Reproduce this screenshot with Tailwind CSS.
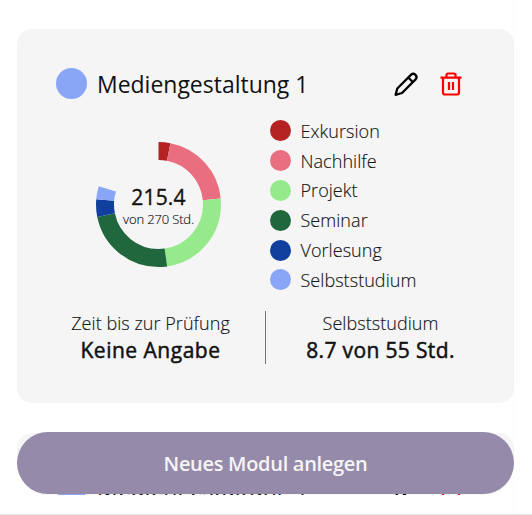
<!DOCTYPE html>
<html lang="de">
<head>
<meta charset="utf-8">
<title>Module</title>
<script src="https://cdn.jsdelivr.net/npm/@tailwindcss/browser@4"></script>
</head>
<body class="relative h-[515px] overflow-hidden bg-white font-['Open_Sans',sans-serif] text-[#111]">
<main class="ml-[17px] h-[495px] w-[497px] overflow-hidden rounded-b-[31px] pt-[29px]">
  <section class="h-[374px] w-[497px] rounded-[15px] bg-[#f5f5f5]">
    <header class="flex items-center pt-[39px] pl-[39px]">
      <span class="size-[31px] rounded-full bg-[#88a6f5]"></span>
      <h2 class="ml-[10px] w-[295px] text-[24px] leading-[31px] whitespace-nowrap"><span class="inline-block origin-left scale-x-[0.957]">Mediengestaltung 1</span></h2>
      <svg class="size-7" viewBox="0 0 28 28" fill="none" stroke="#000" stroke-width="2.300" stroke-linejoin="round"><path d="M3.600 24.800 5.300 18.500 18.900 4.900C22 2 26.400 6.200 23.600 9.400L10 23ZM16.300 7.500 21 12.200"/></svg>
      <svg class="ml-[17px] size-7" viewBox="0 0 28 28" fill="none" stroke="#f00" stroke-width="2.200"><path d="M3.500 7.700H24.500M6 8V22.500Q6 24.500 8 24.500H20Q22 24.500 22 22.500V8M9.500 7.500V5Q9.500 3.500 11 3.500H17Q18.500 3.500 18.500 5V7.500M12 12V20M16 12V20"/></svg>
    </header>
    <div class="flex pt-[17px] pl-[79px]">
      <div class="relative mt-[26px] size-[125px]">
        <svg class="size-[125px] -rotate-90" viewBox="0 0 125 125" fill="none" stroke-width="18">
          <circle cx="62.500" cy="62.500" r="53.500" pathLength="360" stroke="#b52222" stroke-dasharray="11 360"/>
          <circle cx="62.500" cy="62.500" r="53.500" pathLength="360" stroke="#e96e7f" stroke-dasharray="73.500 360" stroke-dashoffset="-11"/>
          <circle cx="62.500" cy="62.500" r="53.500" pathLength="360" stroke="#96ea8b" stroke-dasharray="87.500 360" stroke-dashoffset="-84.500"/>
          <circle cx="62.500" cy="62.500" r="53.500" pathLength="360" stroke="#20673d" stroke-dasharray="86.500 360" stroke-dashoffset="-172"/>
          <circle cx="62.500" cy="62.500" r="53.500" pathLength="360" stroke="#103f9d" stroke-dasharray="16.500 360" stroke-dashoffset="-258.500"/>
          <circle cx="62.500" cy="62.500" r="53.500" pathLength="360" stroke="#88a6f5" stroke-dasharray="12 360" stroke-dashoffset="-275"/>
        </svg>
        <div class="absolute inset-0 flex flex-col items-center pt-[42px]">
          <span class="text-[21px] leading-[26px] tracking-[0.2px] [-webkit-text-stroke:0.35px_#111]">215.4</span>
          <span class="text-[13px] leading-[18px] tracking-[-0.15px] font-light whitespace-nowrap [-webkit-text-stroke:0.15px_#111]">von 270 Std.</span>
        </div>
      </div>
      <ul class="ml-[49px] grid auto-rows-[29.800px] text-[18px] font-light tracking-[0.05px] [-webkit-text-stroke:0.15px_#222]">
        <li class="flex items-center gap-[9.500px]"><i class="size-[21px] rounded-full bg-[#b52222]"></i><span class="pt-px">Exkursion</span></li>
        <li class="flex items-center gap-[9.500px]"><i class="size-[21px] rounded-full bg-[#e96e7f]"></i><span class="pt-px">Nachhilfe</span></li>
        <li class="flex items-center gap-[9.500px]"><i class="size-[21px] rounded-full bg-[#96ea8b]"></i><span>Projekt</span></li>
        <li class="flex items-center gap-[9.500px]"><i class="size-[21px] rounded-full bg-[#20673d]"></i><span>Seminar</span></li>
        <li class="flex items-center gap-[9.500px]"><i class="size-[21px] rounded-full bg-[#103f9d]"></i><span>Vorlesung</span></li>
        <li class="flex items-center gap-[9.500px]"><i class="size-[21px] rounded-full bg-[#88a6f5]"></i><span class="pt-px">Selbststudium</span></li>
      </ul>
    </div>
    <div class="mt-[16px] flex h-[53px] pl-[19px] text-center">
      <div class="w-[230px] border-r border-[#777]">
        <p class="text-[18px] leading-[25px] font-light tracking-[0.05px] [-webkit-text-stroke:0.15px_#222]">Zeit bis zur Prüfung</p>
        <p class="text-[21px] leading-[28px] tracking-[0.5px] [-webkit-text-stroke:0.5px_#111]">Keine Angabe</p>
      </div>
      <div class="w-[229px]">
        <p class="text-[18px] leading-[25px] font-light tracking-[0.05px] [-webkit-text-stroke:0.15px_#222]">Selbststudium</p>
        <p class="text-[21px] leading-[28px] tracking-[0.35px] [-webkit-text-stroke:0.5px_#111]">8.7 von 55 Std.</p>
      </div>
    </div>
  </section>
  <section class="mt-[30px] h-[374px] w-[497px] rounded-[15px] bg-[#f5f5f5]">
    <header class="flex items-center pt-[39px] pl-[39px]">
      <span class="size-[31px] rounded-full bg-[#88a6f5]"></span>
      <h2 class="ml-[10px] w-[295px] text-[24px] leading-[31px] whitespace-nowrap"><span class="inline-block origin-left scale-x-[0.957]">Mediengestaltung 1</span></h2>
      <svg class="size-7" viewBox="0 0 28 28" fill="none" stroke="#000" stroke-width="2.300" stroke-linejoin="round"><path d="M3.600 24.800 5.300 18.500 18.900 4.900C22 2 26.400 6.200 23.600 9.400L10 23ZM16.300 7.500 21 12.200"/></svg>
      <svg class="ml-[17px] size-7" viewBox="0 0 28 28" fill="none" stroke="#f00" stroke-width="2.200"><path d="M3.500 7.700H24.500M6 8V22.500Q6 24.500 8 24.500H20Q22 24.500 22 22.500V8M9.500 7.500V5Q9.500 3.500 11 3.500H17Q18.500 3.500 18.500 5V7.500M12 12V20M16 12V20"/></svg>
    </header>
  </section>
</main>
<div class="absolute top-0 left-[513px] h-[514px] w-px bg-black/[0.015]"></div>
<button class="absolute top-[432px] left-[17px] h-[62.400px] w-[497px] rounded-full bg-[#968aaa] pt-[2px] text-[20px] font-semibold tracking-[-0.300px] text-[#f5f5f5]">Neues Modul anlegen</button>
<div class="absolute top-[514px] left-0 h-px w-full bg-[#e5e5e5]"></div>
</body>
</html>
